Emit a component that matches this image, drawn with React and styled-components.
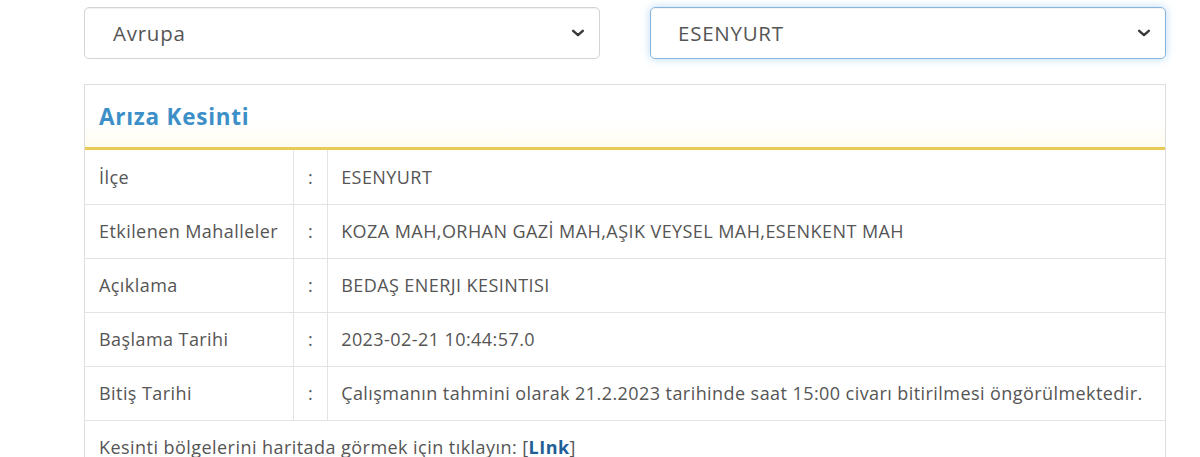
import React from "react";
import styled, { createGlobalStyle } from "styled-components";

const Global = createGlobalStyle`
  html, body {
    margin: 0;
    background: #fff;
    font-family: "Open Sans", "Noto Sans", sans-serif;
    color: #555;
  }
`;

const Page = styled.div`
  padding: 7px 34px 0 84px;
  width: 1082px;
`;

const Selects = styled.div`
  display: grid;
  grid-template-columns: 1fr 1fr;
  gap: 50px;
  margin-bottom: 25px;
`;

const SelectBox = styled.div`
  height: 52px;
  box-sizing: border-box;
  border: 1px solid ${p => (p.focused ? "#86b6df" : "#d4d4d4")};
  border-radius: 5px;
  box-shadow: ${p =>
    p.focused
      ? "0 0 8px rgba(102,175,233,.45), inset 0 1px 1px rgba(0,0,0,.05)"
      : "inset 0 1px 1px rgba(0,0,0,.06)"};
  display: flex;
  align-items: center;
  justify-content: space-between;
  padding: 0 14px 0 ${p => (p.focused ? "27px" : "28px")};
  font-size: 20.5px;
  letter-spacing: 0.75px;
  color: #555;
  svg {
    width: 14px;
    height: 14px;
    color: #3a3a3a;
  }
`;

const Panel = styled.div`
  border: 1px solid #dedede;
  border-bottom: none;
`;

const Heading = styled.div`
  height: 62px;
  display: flex;
  align-items: center;
  padding: 0 14px;
  background: linear-gradient(to bottom, #fff 60%, #fffcef 100%);
  border-bottom: 3px solid #e8ca58;
  font-size: 22.5px;
  font-weight: 700;
  letter-spacing: 0.75px;
  color: #3d8fc8;
`;

const Table = styled.table`
  width: 100%;
  border-collapse: collapse;
  font-size: 18px;
  letter-spacing: 0.43px;
  color: #555;
`;

const Row = styled.tr`
  height: 54px;
  border-bottom: 1px solid #e3e3e3;
`;

const Cell = styled.td`
  padding: 0 14px;
  border-right: 1px solid #e3e3e3;
  white-space: nowrap;
  width: ${p => p.w || "auto"};
  text-align: ${p => (p.center ? "center" : "left")};
  &:last-child {
    border-right: none;
    padding-left: 13px;
  }
`;

const Footer = styled.div`
  padding: 14px 14px 0;
  font-size: 18px;
  letter-spacing: 0.45px;
  color: #555;
  a {
    color: #1f5f96;
    font-weight: 700;
    text-decoration: none;
  }
`;

const Chevron = () => (
  <svg viewBox="0 0 16 16" fill="none">
    <path d="M2.5 5.5 L8 10.5 L13.5 5.5" stroke="currentColor" strokeWidth="2.8" strokeLinecap="round" strokeLinejoin="round" />
  </svg>
);

const rows = [
  ["İlçe", "ESENYURT"],
  ["Etkilenen Mahalleler", "KOZA MAH,ORHAN GAZİ MAH,AŞIK VEYSEL MAH,ESENKENT MAH"],
  ["Açıklama", "BEDAŞ ENERJI KESINTISI"],
  ["Başlama Tarihi", "2023-02-21 10:44:57.0"],
  ["Bitiş Tarihi", "Çalışmanın tahmini olarak 21.2.2023 tarihinde saat 15:00 civarı bitirilmesi öngörülmektedir."],
];

export default function App() {
  return (
    <Page>
      <Global />
      <Selects>
        <SelectBox>
          <span>Avrupa</span>
          <Chevron />
        </SelectBox>
        <SelectBox focused>
          <span>ESENYURT</span>
          <Chevron />
        </SelectBox>
      </Selects>
      <Panel>
        <Heading>Arıza Kesinti</Heading>
        <Table>
          <tbody>
            {rows.map(([label, value]) => (
              <Row key={label}>
                <Cell w="180px">{label}</Cell>
                <Cell w="4px" center>:</Cell>
                <Cell>{value}</Cell>
              </Row>
            ))}
          </tbody>
        </Table>
        <Footer>
          Kesinti bölgelerini haritada görmek için tıklayın: [<a href="#">LInk</a>]
        </Footer>
      </Panel>
    </Page>
  );
}
